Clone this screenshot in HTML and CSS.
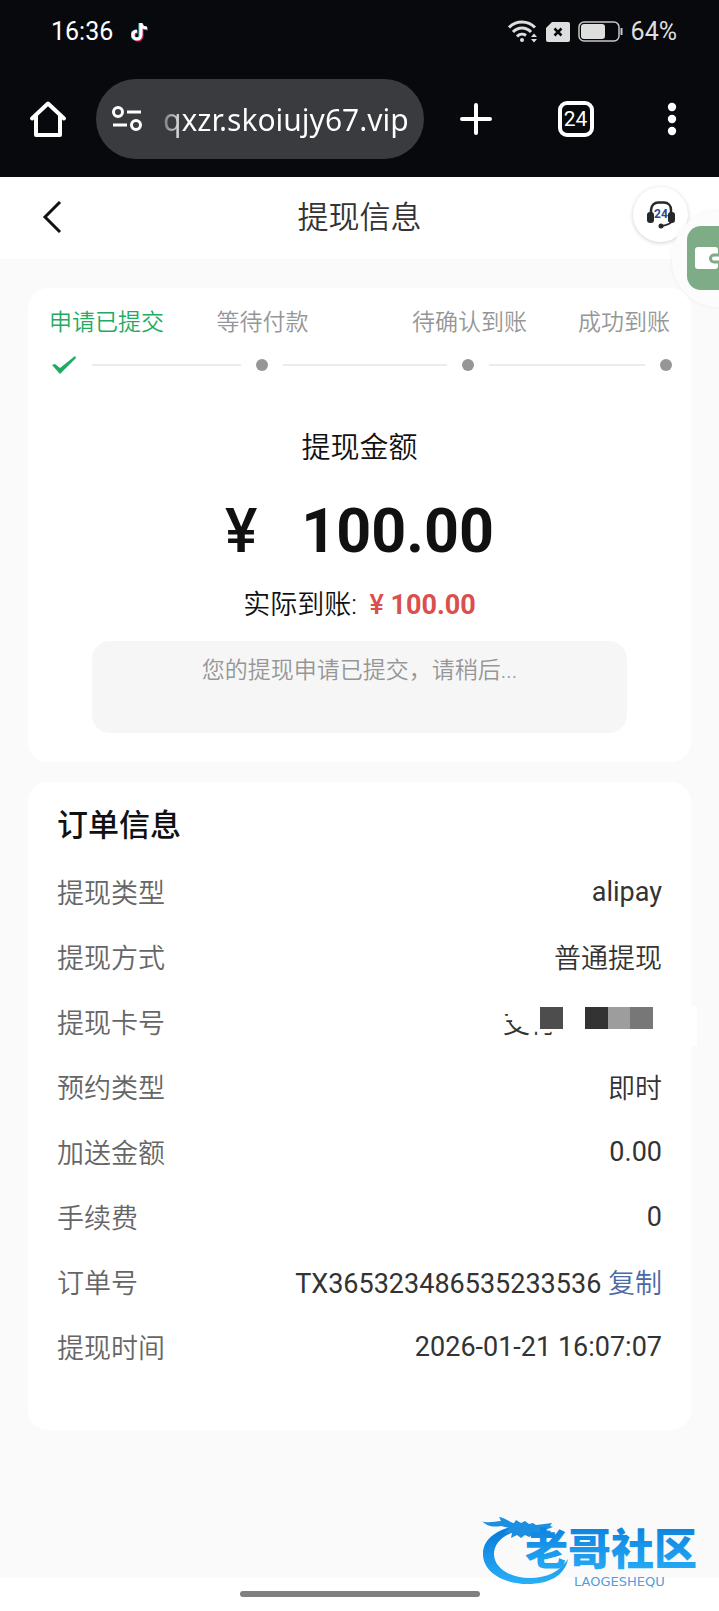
FILE: index.html
```
<!DOCTYPE html>
<html lang="zh-CN">
<head>
    <meta charset="UTF-8">
    <meta name="viewport" content="width=device-width, initial-scale=1.0">
    <title>提现信息</title>
    <link rel="stylesheet" href="styles.css">
</head>
<body>

    <!-- Phone status bar and browser toolbar -->
    <div class="browser">
        <div class="status-bar">
            <span class="time">16:36</span>
            <svg class="note" width="18" height="20" viewBox="0 0 18 20" fill="none" stroke-width="3">
                <path d="M10 1v12a4 4 0 1 1-4-4M10 1c0 3 2 5 6 5" stroke="#3ddbe0" transform="translate(-1 0)"/>
                <path d="M10 1v12a4 4 0 1 1-4-4M10 1c0 3 2 5 6 5" stroke="#d8285a" transform="translate(1 1)"/>
                <path d="M10 1v12a4 4 0 1 1-4-4M10 1c0 3 2 5 6 5" stroke="#fff"/>
            </svg>
            <span class="status-right">
                <svg width="30" height="23" viewBox="0 0 30 23" fill="none" stroke="#dedede" stroke-width="3">
                    <path d="M1 7.500a18 18 0 0 1 26 0M5 12a12 12 0 0 1 18 0M9 16.500a7 7 0 0 1 9-1"/>
                    <circle cx="14" cy="20" r="2" fill="#dedede" stroke="none"/>
                    <path d="M23 17l3-3.500 3 3.500zM23 19l3 3.500 3-3.500z" fill="#dedede" stroke="none"/>
                </svg>
                <svg width="24" height="20" viewBox="0 0 24 20">
                    <path d="M6 0h16a2 2 0 0 1 2 2v16a2 2 0 0 1-2 2H2a2 2 0 0 1-2-2V6z" fill="#dedede"/>
                    <path d="M8.500 6.500l7 7M15.500 6.500l-7 7" stroke="#08090d" stroke-width="2.500"/>
                </svg>
                <svg width="45" height="21" viewBox="0 0 45 21">
                    <rect x="1" y="1" width="40" height="19" rx="5" fill="none" stroke="#c8c8c8" stroke-width="1.500"/>
                    <rect x="3" y="3" width="24" height="15" rx="3" fill="#dedede"/>
                    <path d="M43.500 7v7" stroke="#c8c8c8" stroke-width="2"/>
                </svg>
                <span>64%</span>
            </span>
        </div>
        <div class="toolbar">
            <button class="tool" aria-label="主页">
                <svg width="38" height="38" viewBox="0 0 38 38" fill="none" stroke="#fff" stroke-width="4" stroke-linejoin="round" stroke-linecap="round">
                    <path d="M3 18.500L19 3.500l16 15M7 16v19h24V16"/>
                </svg>
            </button>
            <button class="address">
                <svg width="30" height="26" viewBox="0 0 30 26" fill="none" stroke="#fff" stroke-width="3">
                    <circle cx="6" cy="6" r="4.500"/>
                    <circle cx="24" cy="19" r="4.500"/>
                    <path d="M15 6h14M1 19h14"/>
                </svg>
                <span class="url">qxzr.skoiujy67.vip</span>
            </button>
            <div class="actions">
                <button class="tool" aria-label="新标签页">
                    <svg width="32" height="32" viewBox="0 0 32 32" stroke="#fff" stroke-width="4" stroke-linecap="round">
                        <path d="M16 2v28M2 16h28"/>
                    </svg>
                </button>
                <button class="tool tabs">24</button>
                <button class="tool" aria-label="菜单">
                    <svg width="10" height="34" viewBox="0 0 10 34" fill="#fff">
                        <circle cx="5" cy="5" r="4.200"/>
                        <circle cx="5" cy="17" r="4.200"/>
                        <circle cx="5" cy="29" r="4.200"/>
                    </svg>
                </button>
            </div>
        </div>
    </div>

    <header class="header">
        <button class="back" aria-label="返回">
            <svg width="20" height="32" viewBox="0 0 20 32" fill="none" stroke="#111" stroke-width="3">
                <path d="M18 1L3 16l15 15"/>
            </svg>
        </button>
        <h1>提现信息</h1>
        <button class="service" aria-label="客服">
            <svg width="30" height="28" viewBox="0 0 30 28" fill="none" stroke="#26272b">
                <path d="M5 12V9c0-5 4-7.500 7-7.500h6c4 0 7 3 7 7.500v3" stroke-width="2.500"/>
                <rect x="1" y="11" width="7" height="11" rx="3" fill="#26272b" stroke="none"/>
                <rect x="22" y="11" width="7" height="11" rx="3" fill="#26272b" stroke="none"/>
                <path d="M26 20c-1 3-5 4-10 5" stroke-width="2"/>
                <circle cx="15" cy="25" r="2.500" fill="#26272b" stroke="none"/>
                <text x="15" y="17" class="service-text">24</text>
            </svg>
        </button>
        <button class="wallet" aria-label="钱包">
            <svg width="32" height="64" viewBox="0 0 32 64">
                <path d="M14 0h18v64H14A14 14 0 0 1 0 50V14A14 14 0 0 1 14 0z" fill="#7dac87"/>
                <rect x="8" y="21" width="23" height="22" rx="3" fill="#fff"/>
                <path d="M32 29h-5a3.500 3.500 0 0 0 0 7h5" fill="#fff" stroke="#7dac87" stroke-width="3"/>
            </svg>
        </button>
    </header>

    <main>
        <section class="card">
            <ol class="steps">
                <li class="active">申请已提交</li>
                <li>等待付款</li>
                <li>待确认到账</li>
                <li>成功到账</li>
            </ol>
            <div class="progress">
                <svg width="26" height="18" viewBox="0 0 26 18">
                    <path d="M1 9l3-1 5 4L24 0l1 2L9 18z" fill="#1fab63"/>
                </svg>
                <i class="line first"></i><i class="dot"></i>
                <i class="line second"></i><i class="dot"></i>
                <i class="line third"></i><i class="dot"></i>
            </div>

            <h2 class="amount-title">提现金额</h2>
            <p class="amount"><span>¥</span><b>100.00</b></p>
            <p class="actual">实际到账: <span>¥ <b>100.00</b></span></p>
            <p class="notice">您的提现申请已提交，请稍后...</p>
        </section>

        <section class="card order">
            <h2>订单信息</h2>
            <dl>
                <div><dt>提现类型</dt><dd>alipay</dd></div>
                <div><dt>提现方式</dt><dd class="zh">普通提现</dd></div>
                <div class="card-number">
                    <dt>提现卡号</dt>
                    <dd class="zh">
                        <span class="cut-first">支</span><span class="cut-second">付</span>
                        <svg class="mosaic" width="113" height="22" viewBox="0 0 113 22" shape-rendering="crispEdges">
                            <path d="M0 0h23v22H0z" fill="#4d4d4d"/>
                            <path d="M45 0h23v22H45z" fill="#333"/>
                            <path d="M68 0h22v22H68z" fill="#9d9d9d"/>
                            <path d="M90 0h23v22H90z" fill="#777"/>
                        </svg>
                    </dd>
                </div>
                <div><dt>预约类型</dt><dd class="zh">即时</dd></div>
                <div><dt>加送金额</dt><dd>0.00</dd></div>
                <div><dt>手续费</dt><dd>0</dd></div>
                <div><dt>订单号</dt><dd>TX365323486535233536 <button class="copy">复制</button></dd></div>
                <div><dt>提现时间</dt><dd>2026-01-21 16:07:07</dd></div>
            </dl>
        </section>
    </main>

    <footer class="gesture-bar">
        <div class="gesture"></div>
        <svg class="brand" width="226" height="74" viewBox="0 0 226 74">
            <defs>
                <linearGradient id="blue" x1="0" y1="0" x2="0" y2="1">
                    <stop offset="0" stop-color="#0878d8"/>
                    <stop offset="1" stop-color="#28b0f8"/>
                </linearGradient>
            </defs>
            <!-- dragon ring -->
            <path d="M30 11C14 15 2 24 2 38c0 18 20 30 45 30 20 0 37-8 40-25-8 13-22 19-38 19-20 0-36-10-36-24 0-10 8-18 20-22z" fill="url(#blue)"/>
            <path d="M0 5c8 3 14 0 20 0l-2-4c7 1 10 5 15 6l2-3 5 3 4-2 4 3 4-1 3 2c6-1 11-1 16-2l-2 3 3 1-8 3 6 1c-1 3-3 5-5 6l-12-3-5 3-4-2-4 3-4-3-6 3 1-5-8 0 5-5-8-2c-6 1-13 1-18-4z" fill="#1d8fe0"/>
            <text x="44" y="49" class="brand-name" fill="url(#blue)">老哥社区</text>
            <text x="93" y="70" class="brand-latin">LAOGESHEQU</text>
        </svg>
    </footer>

</body>
</html>
```
FILE: styles.css
```
* {
    box-sizing: border-box;
}

body {
    background-color: #fafafa;
    color: #333;
    font-family: Roboto, 'Noto Sans CJK SC', sans-serif;
    font-size: 27px;
    margin: 0;
    display: flex;
    flex-direction: column;
    min-height: 100vh;
    overflow-x: hidden;
}

h1, h2, p, ol, dl, dd {
    margin: 0;
    padding: 0;
    font-weight: 400;
}

button {
    background: none;
    border: 0;
    padding: 0;
    color: inherit;
    font: inherit;
    cursor: pointer;
}

svg {
    display: block;
    flex-shrink: 0;
}

/* Browser */
.browser {
    background-color: #08090d;
    color: #fff;
}

.status-bar {
    display: flex;
    align-items: center;
    height: 79px;
    padding: 0 42px 16px 51px;
    font-size: 25px;
}

.note {
    margin-left: 18px;
}

.status-right {
    display: flex;
    align-items: center;
    gap: 8px;
    margin-left: auto;
    color: #dedede;
}

.toolbar {
    display: flex;
    align-items: center;
    height: 98px;
    padding: 0 42px 18px 29px;
}

.address {
    display: flex;
    align-items: center;
    gap: 21px;
    width: 328px;
    height: 80px;
    margin-left: 29px;
    padding: 0 16px;
    border-radius: 40px;
    background-color: #3a3b3f;
}

.url {
    font-family: 'Noto Sans', sans-serif;
    font-size: 30px;
    background: linear-gradient(90deg, #77787b, #fff 22px);
    background-clip: text;
    color: transparent;
}

.actions {
    flex: 1;
    display: flex;
    align-items: center;
    justify-content: space-between;
    margin-left: 36px;
}

.tabs {
    width: 36px;
    height: 36px;
    margin-right: 8px;
    border: 4px solid #fff;
    border-radius: 9px;
    font-size: 21px;
    line-height: 28px;
    text-align: center;
}

/* Page header */
.header {
    position: relative;
    display: flex;
    align-items: center;
    justify-content: center;
    height: 82px;
    padding-bottom: 8px;
    background-color: #fff;
}

.header h1 {
    font-size: 31px;
    font-weight: 350;
}

.back {
    position: absolute;
    left: 42px;
    top: 24px;
}

.service {
    position: absolute;
    right: 31px;
    top: 10px;
    display: flex;
    align-items: center;
    justify-content: center;
    width: 55px;
    height: 55px;
    border-radius: 50%;
    background-color: #fff;
    box-shadow: 0 1px 4px rgba(0, 0, 0, 0.18);
}

.service-text {
    fill: #2c4a94;
    stroke: none;
    font-size: 12px;
    font-weight: 700;
    text-anchor: middle;
}

.wallet {
    position: absolute;
    right: 0;
    top: 34px;
    padding: 15px 0 17px 15px;
    border-radius: 48px 0 0 48px;
    background-color: rgba(252, 252, 252, 0.9);
    box-shadow: 0 0 4px rgba(0, 0, 0, 0.06);
}

/* Cards */
main {
    flex: 1;
    display: flex;
    flex-direction: column;
    gap: 20px;
    padding: 29px 28px;
}

.card {
    background-color: #fff;
    border-radius: 20px;
    padding: 18px 21px 29px;
    text-align: center;
}

.steps {
    display: grid;
    grid-template-columns: minmax(0, 17fr) minmax(0, 32fr) minmax(0, 32fr) minmax(0, 15fr);
    list-style: none;
    color: #969696;
    font-size: 23px;
    font-weight: 350;
    line-height: 34px;
    white-space: nowrap;
}

.steps li:first-child {
    justify-self: start;
}

.steps li:last-child {
    justify-self: end;
}

.steps .active {
    color: #1fab63;
}

.progress {
    display: flex;
    align-items: center;
    gap: 15px;
    height: 50px;
    margin-right: -2px;
    padding-left: 2px;
}

.line {
    height: 2px;
    background-color: #ebebeb;
}

.first {
    flex: 19;
}

.second {
    flex: 21;
}

.third {
    flex: 20;
}

.dot {
    width: 12px;
    height: 12px;
    border-radius: 50%;
    background-color: #969696;
}

.amount-title {
    margin-top: 37px;
    color: #111;
    font-size: 29px;
    font-weight: 350;
    line-height: 42px;
}

.amount {
    display: flex;
    justify-content: center;
    gap: 44px;
    margin-top: 24px;
    color: #111;
    font-size: 61px;
    line-height: 76px;
}

.amount span {
    font-weight: 500;
}

.actual {
    margin-top: 16px;
    color: #111;
    font-weight: 350;
    line-height: 40px;
}

.actual span {
    color: #d9504d;
    font-weight: 500;
    margin-left: 6px;
}

.notice {
    height: 92px;
    margin: 16px 43px 0;
    padding: 13px;
    border-radius: 18px;
    background-color: #f6f6f6;
    color: #969696;
    font-size: 23px;
    font-weight: 350;
    line-height: 34px;
}

/* Order details */
.order {
    padding: 21px 29px 51px;
    text-align: left;
}

.order h2 {
    margin-bottom: 10px;
    color: #111;
    font-size: 31px;
    font-weight: 500;
    line-height: 46px;
}

.order dl > div {
    display: flex;
    align-items: center;
    justify-content: space-between;
    height: 65px;
}

.order dt {
    color: #666;
    font-weight: 350;
}

.order .zh {
    font-weight: 350;
}

.order .card-number {
    position: relative;
}

.card-number dd {
    display: flex;
    align-items: center;
    padding-right: 105px;
}

.card-number::after {
    content: '';
    position: absolute;
    right: -35px;
    top: 17px;
    width: 12px;
    height: 40px;
    background-color: #fff;
}

/* covered strokes of the account name */
.cut-first {
    clip-path: polygon(0 28%, 18% 28%, 18% 43%, 34% 43%, 34% 52%, 64% 52%, 64% 64%, 100% 64%, 100% 100%, 0 100%);
}

.cut-second {
    clip-path: inset(76% 20% 0 15%);
}

.mosaic {
    position: absolute;
    right: 9px;
    top: 18px;
}

.copy {
    color: #4a69a5;
    font-weight: 350;
}

/* Bottom */
.gesture-bar {
    position: relative;
    display: flex;
    justify-content: center;
    height: 33px;
    padding-top: 13px;
    background-color: #fff;
}

.gesture {
    width: 240px;
    height: 6px;
    border-radius: 3px;
    background-color: #808080;
}

.brand {
    position: absolute;
    right: 12px;
    bottom: 21px;
}

.brand-name {
    font-family: 'Noto Sans CJK SC', sans-serif;
    font-size: 43px;
    font-weight: 900;
}

.brand-latin {
    fill: #4f9ede;
    font-family: 'DejaVu Sans', sans-serif;
    font-size: 13px;
}
```
